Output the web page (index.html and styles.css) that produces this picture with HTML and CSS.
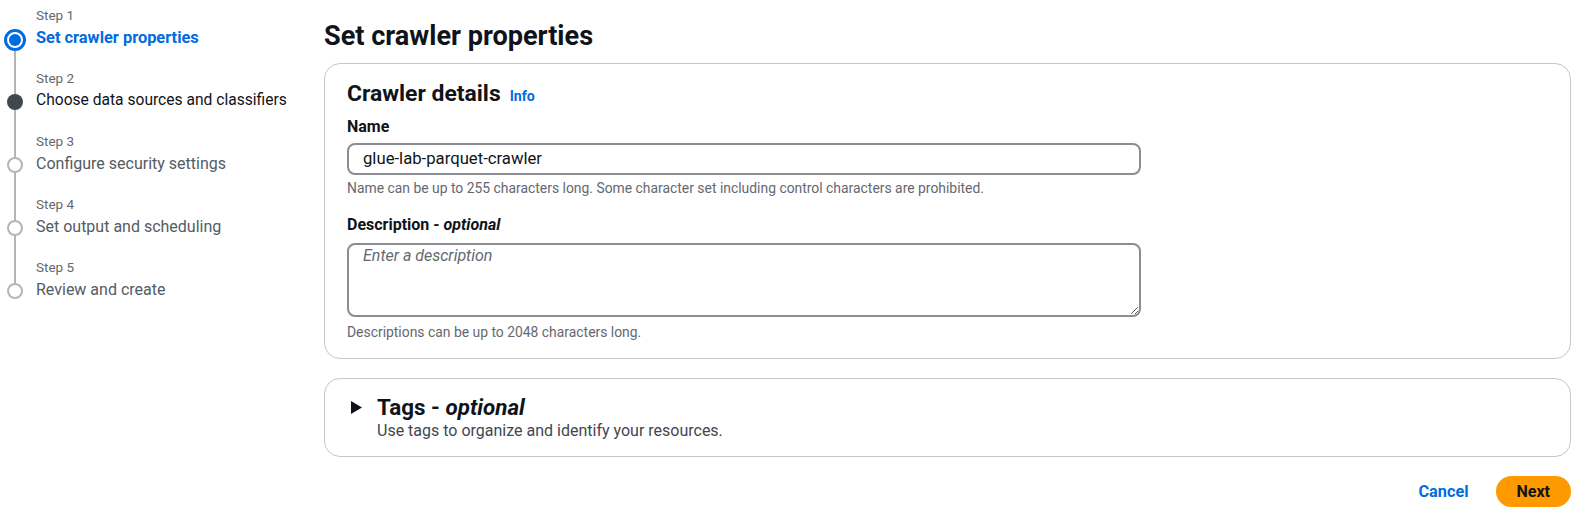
FILE: index.html
```html
<!DOCTYPE html>
<html lang="en">
<head>
<meta charset="utf-8">
<title>Set crawler properties</title>
<link rel="stylesheet" href="styles.css">
</head>
<body>
<div class="page">
  <nav class="wizard-nav">
    <ol class="steps">
      <li class="step step--active">
        <span class="step-label">Step 1</span>
        <span class="marker marker--active"><span class="marker-dot"></span></span>
        <span class="step-title">Set crawler properties</span>
      </li>
      <li class="step step--next">
        <span class="step-label">Step 2</span>
        <span class="marker marker--filled"></span>
        <span class="step-title">Choose data sources and classifiers</span>
      </li>
      <li class="step step--disabled">
        <span class="step-label">Step 3</span>
        <span class="marker marker--empty"></span>
        <span class="step-title">Configure security settings</span>
      </li>
      <li class="step step--disabled">
        <span class="step-label">Step 4</span>
        <span class="marker marker--empty"></span>
        <span class="step-title">Set output and scheduling</span>
      </li>
      <li class="step step--disabled">
        <span class="step-label">Step 5</span>
        <span class="marker marker--empty"></span>
        <span class="step-title">Review and create</span>
      </li>
    </ol>
  </nav>

  <main class="content">
    <h1 class="page-title">Set crawler properties</h1>

    <section class="panel panel--details">
      <div class="panel-header">
        <h2 class="panel-title">Crawler details</h2>
        <a class="info-link" href="#">Info</a>
      </div>

      <div class="field field--first">
        <label class="field-label" for="crawler-name">Name</label>
        <input class="text-input" id="crawler-name" type="text" value="glue-lab-parquet-crawler">
        <p class="field-hint">Name can be up to 255 characters long. Some character set including control characters are prohibited.</p>
      </div>

      <div class="field field--desc">
        <label class="field-label" for="crawler-desc">Description - <i>optional</i></label>
        <textarea class="text-area" id="crawler-desc" placeholder="Enter a description"></textarea>
        <p class="field-hint field-hint--desc">Descriptions can be up to 2048 characters long.</p>
      </div>
    </section>

    <section class="panel panel--tags">
      <div class="expand-header">
        <svg class="caret" width="11" height="13" viewBox="0 0 11 13" aria-hidden="true">
          <polygon points="0,0 11,6.5 0,13" fill="#0f141a"/>
        </svg>
        <div class="expand-text">
          <h2 class="expand-title">Tags - <i>optional</i></h2>
          <p class="expand-desc">Use tags to organize and identify your resources.</p>
        </div>
      </div>
    </section>

    <div class="actions">
      <button class="btn btn-link" type="button">Cancel</button>
      <button class="btn btn-primary" type="button">Next</button>
    </div>
  </main>
</div>
</body>
</html>
```

FILE: styles.css
```css
* {
  box-sizing: border-box;
}

html, body {
  margin: 0;
  padding: 0;
  background: #ffffff;
}

body {
  font-family: Roboto, "Noto Sans", "Liberation Sans", sans-serif;
  color: #0f141a;
  font-size: 16px;
}

.page {
  display: flex;
  width: 1589px;
  min-height: 514px;
}

/* ---------- Wizard navigation ---------- */
.wizard-nav {
  flex: 0 0 324px;
  padding-top: 5px;
}

.steps {
  list-style: none;
  margin: 0;
  padding: 0;
  background-image: linear-gradient(#b4b4bb, #b4b4bb);
  background-repeat: no-repeat;
  background-position: 14px 35px;
  background-size: 2px 251px;
}

.step {
  display: grid;
  grid-template-columns: 30px 1fr;
  grid-template-rows: 20px auto;
  column-gap: 6px;
}

.step-label {
  grid-column: 2;
  grid-row: 1;
  font-size: 13.5px;
  line-height: 20px;
  color: #656871;
}

.step-title {
  grid-column: 2;
  grid-row: 2;
  font-size: 16px;
  line-height: 25px;
  padding-bottom: 18px;
}

.step:last-child .step-title {
  padding-bottom: 0;
}

.step--active .step-title {
  color: #006ce0;
  font-weight: 700;
  font-size: 16.4px;
}

.step--next .step-title {
  color: #0f141a;
  font-size: 15.6px;
}

.step--disabled .step-title {
  color: #545b64;
}

.marker {
  grid-column: 1;
  grid-row: 2;
  justify-self: center;
  align-self: start;
  display: flex;
  align-items: center;
  justify-content: center;
  border-radius: 50%;
  width: 16px;
  height: 16px;
  margin-top: 6px;
}

.marker--active {
  width: 22px;
  height: 22px;
  margin-top: 4px;
  border: 3px solid #006ce0;
  background: #ffffff;
}

.marker-dot {
  width: 12px;
  height: 12px;
  border-radius: 50%;
  background: #006ce0;
}

.marker--filled {
  background: #424650;
}

.marker--empty {
  border: 2px solid #b4b4bb;
  background: #ffffff;
}

/* ---------- Main content ---------- */
.content {
  flex: 1;
  padding: 19px 18px 0 0;
  display: flex;
  flex-direction: column;
}

.page-title {
  margin: 0 0 10px;
  font-size: 27.1px;
  line-height: 34px;
  font-weight: 700;
  color: #0f141a;
}

.panel {
  border: 1px solid #c6c6cd;
  border-radius: 16px;
  background: #ffffff;
}

.panel--details {
  padding: 16px 22px 17px;
}

.panel--tags {
  margin-top: 19px;
  padding: 15px 22px 14px;
}

.panel-header {
  display: flex;
  align-items: baseline;
  gap: 9px;
}

.panel-title {
  margin: 0;
  font-size: 22.9px;
  line-height: 28px;
  font-weight: 700;
}

.info-link {
  font-size: 14.2px;
  font-weight: 700;
  color: #006ce0;
  text-decoration: none;
}

.field {
  display: flex;
  flex-direction: column;
  align-items: flex-start;
}

.field--first {
  margin-top: 8px;
}

.field--desc {
  margin-top: 17px;
}

.field-label {
  font-size: 16px;
  line-height: 22px;
  font-weight: 700;
  color: #0f141a;
}

.field-label i {
  font-style: italic;
}

.text-input {
  margin-top: 5px;
  width: 794px;
  height: 32px;
  border: 2px solid #8c8c94;
  border-radius: 8px;
  padding: 0 14px 1px;
  font-family: inherit;
  font-size: 16.7px;
  line-height: 22px;
  color: #0f141a;
  background: #ffffff;
}

.text-area {
  margin-top: 7px;
  width: 794px;
  height: 74px;
  border: 2px solid #8c8c94;
  border-radius: 8px;
  padding: 1px 14px;
  font-family: inherit;
  font-size: 16px;
  line-height: 20px;
  color: #0f141a;
  background: #ffffff;
}

.text-area::placeholder {
  color: #656871;
  font-style: italic;
}

.field-hint {
  margin: 4px 0 0;
  font-size: 13.9px;
  line-height: 18px;
  color: #656871;
}

.field-hint--desc {
  margin-top: 6px;
}

/* ---------- Expandable tags section ---------- */
.expand-header {
  display: flex;
  align-items: flex-start;
}

.caret {
  flex: none;
  margin: 7px 15px 0 4px;
}

.expand-title {
  margin: 0;
  font-size: 22.4px;
  line-height: 26px;
  font-weight: 700;
}

.expand-desc {
  margin: 0;
  font-size: 16px;
  line-height: 22px;
  color: #424650;
}

/* ---------- Actions ---------- */
.actions {
  margin-top: 19px;
  display: flex;
  justify-content: flex-end;
  gap: 7px;
}

.btn {
  height: 31px;
  border: none;
  border-radius: 16px;
  padding: 0 20px;
  font-family: inherit;
  font-size: 16.3px;
  font-weight: 700;
  line-height: 31px;
  cursor: pointer;
}

.btn-link {
  background: transparent;
  color: #006ce0;
}

.btn-primary {
  background: #ff9900;
  color: #0f141a;
  padding: 0 21px;
  font-size: 16px;
}
```
